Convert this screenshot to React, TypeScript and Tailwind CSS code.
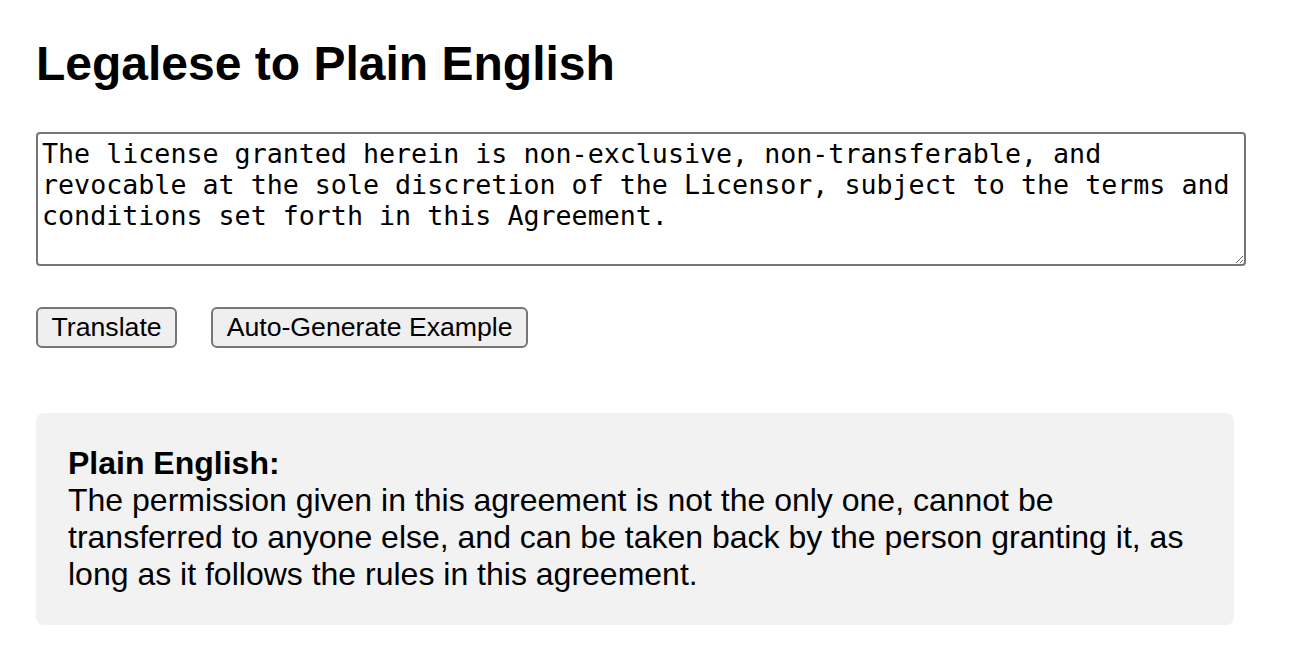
import { useState } from "react";

const SOURCE =
  "The license granted herein is non-exclusive, non-transferable, and revocable at the sole discretion of the Licensor, subject to the terms and conditions set forth in this Agreement.";

const PLAIN =
  "The permission given in this agreement is not the only one, cannot be transferred to anyone else, and can be taken back by the person granting it, as long as it follows the rules in this agreement.";

export default function App() {
  const [text, setText] = useState(SOURCE);

  return (
    <div className="min-h-screen bg-white px-[36px] pt-[36px] font-['Liberation_Sans',Arial,sans-serif] text-black">
      <h1 className="mb-[41px] text-[48px] font-bold leading-[normal]">Legalese to Plain English</h1>

      <textarea
        value={text}
        onChange={(e) => setText(e.target.value)}
        className="block h-[134px] w-[1210px] rounded-[4px] border-2 border-[#767676] bg-white px-[4px] py-[4px] font-['DejaVu_Sans_Mono',monospace] text-[26.67px] leading-[normal] text-black outline-none"
      />

      <div className="mt-[41px] flex gap-[34px]">
        <button className="h-[41px] rounded-[6px] border-2 border-[#767676] bg-[#efefef] px-[13.5px] text-[26.67px] leading-[normal]">
          Translate
        </button>
        <button className="h-[41px] rounded-[6px] border-2 border-[#767676] bg-[#efefef] px-[13.5px] text-[26.67px] leading-[normal]">
          Auto-Generate Example
        </button>
      </div>

      <div className="mt-[65px] w-[1198px] rounded-[8px] bg-[#f2f2f2] p-[32px] text-[32px] leading-[normal]">
        <div className="font-bold">Plain English:</div>
        <div>{PLAIN}</div>
      </div>
    </div>
  );
}
